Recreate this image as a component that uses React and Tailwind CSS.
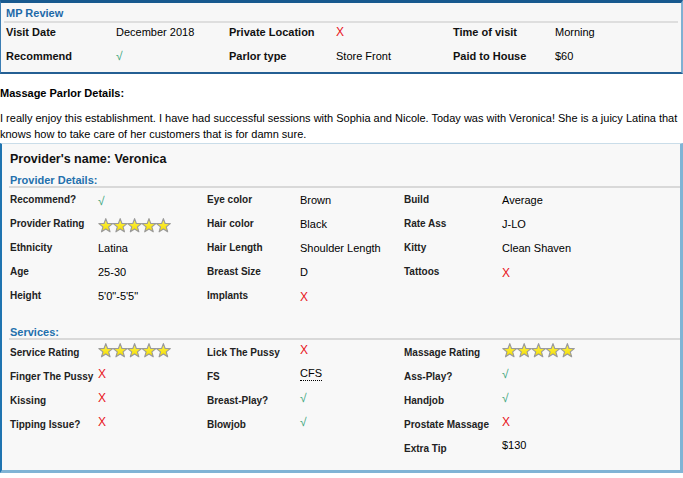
import React from "react";

const Check = () => <span className="text-[#3aa57a] text-[12px]">√</span>;
const Cross = () => <span className="text-[#e8141b] text-[12px]">X</span>;

const Stars = () => (
  <svg width="74" height="16" viewBox="0 0 74 16">
    <defs>
      <linearGradient id="sg" x1="0" y1="0" x2="0" y2="1">
        <stop offset="0" stopColor="#fff64a" />
        <stop offset="1" stopColor="#f5dc00" />
      </linearGradient>
    </defs>
    {[0, 1, 2, 3, 4].map((i) => (
      <polygon
        key={i}
        transform={`translate(${i * 14.4 + 0.5},0.8) scale(1.04)`}
        points="7,0.8 8.7,5.45 13.66,5.64 9.76,8.7 11.11,13.46 7,10.7 2.89,13.46 4.24,8.7 0.34,5.64 5.3,5.45"
        fill="url(#sg)"
        stroke="#9a9a9a"
        strokeWidth="1.1"
        strokeLinejoin="round"
      />
    ))}
  </svg>
);

const Cfs = () => (
  <span className="border-b border-dotted border-black leading-[13px]">CFS</span>
);

const topRows = [
  ["Visit Date", "December 2018", "Private Location", <Cross />, "Time of visit", "Morning"],
  ["Recommend", <Check />, "Parlor type", "Store Front", "Paid to House", "$60"],
];

const providerRows = [
  ["Recommend?", <Check />, "Eye color", "Brown", "Build", "Average"],
  ["Provider Rating", <Stars />, "Hair color", "Black", "Rate Ass", "J-LO"],
  ["Ethnicity", "Latina", "Hair Length", "Shoulder Length", "Kitty", "Clean Shaven"],
  ["Age", "25-30", "Breast Size", "D", "Tattoos", <Cross />],
  ["Height", "5'0\"-5'5\"", "Implants", <Cross />, "", ""],
];

const serviceRows = [
  ["Service Rating", <Stars />, "Lick The Pussy", <Cross />, "Massage Rating", <Stars />],
  ["Finger The Pussy", <Cross />, "FS", <Cfs />, "Ass-Play?", <Check />],
  ["Kissing", <Cross />, "Breast-Play?", <Check />, "Handjob", <Check />],
  ["Tipping Issue?", <Cross />, "Blowjob", <Check />, "Prostate Massage", <Cross />],
  ["", "", "", "", "Extra Tip", "$130"],
];

const DetailGrid = ({ rows, lift }) => (
  <div className="grid grid-cols-[88px_109px_93px_104px_98px_1fr]">
    {rows.map((row, r) =>
      row.map((cell, c) => (
        <div
          key={`${r}-${c}`}
          className={`h-[24px] flex items-center ${
            c % 2 === 0
              ? `text-[10px] font-bold text-[#222] ${lift ? "pt-[1px]" : "pb-[2px]"}`
              : `text-[11px] text-black ${lift ? "pb-[5px]" : "pt-[1px]"}`
          }`}
        >
          {cell}
        </div>
      ))
    )}
  </div>
);

export default function App() {
  return (
    <div className="w-[683px] bg-white text-black font-['Liberation_Sans',Arial,sans-serif]">
      {/* MP Review */}
      <div className="bg-[#f7f7f7] border-t-[3px] border-t-[#17598f] border-l border-l-[#3b7db3] border-r-2 border-r-[#7fb0d2] border-b-2 border-b-[#245f93] pb-[7px]">
        <div className="pt-[2px] pl-[5px] leading-[16px] text-[11px] font-bold text-[#1d69a8]">
          MP Review
        </div>
        <div className="mx-[3px] h-[2px] bg-[#dedede]" />
        <div className="grid grid-cols-[110px_113px_107px_117px_102px_1fr] gap-y-[6px] pl-[5px]">
          {topRows.map((row, r) =>
            row.map((cell, c) => (
              <div
                key={`${r}-${c}`}
                className={`h-[18px] flex items-center text-[11px] ${
                  c % 2 === 0 ? "font-bold text-[#111]" : "text-black"
                }`}
              >
                {cell}
              </div>
            ))
          )}
        </div>
      </div>

      {/* Parlor details */}
      <div className="mt-[11px] leading-[16px] text-[11px] font-bold">Massage Parlor Details:</div>
      <p className="mt-[9px] leading-[16px] text-[11px]">
        I really enjoy this establishment. I have had successful sessions with Sophia and Nicole. Today was with
        Veronica! She is a juicy Latina that knows how to take care of her customers that is for damn sure.
      </p>

      {/* Provider */}
      <div className="mt-[1px] bg-[#f8f8f8] border-t border-t-[#cadde9] border-l-2 border-l-[#1f74b0] border-r-[3px] border-r-[#80b4d5] border-b-[3px] border-b-[#80b4d5] pb-[10px]">
        <div className="pt-[6px] pl-[8px] leading-[18px] text-[12.5px] font-bold text-[#111]">
          Provider's name: Veronica
        </div>
        <div className="mt-[6px] pl-[8px] leading-[12px] text-[11px] font-bold text-[#2370ad]">
          Provider Details:
        </div>
        <div className="ml-[7px] h-[2px] bg-[#d9d9d9]" />
        <div className="pl-[8px]">
          <DetailGrid rows={providerRows} />
        </div>
        <div className="mt-[18px] pl-[8px] leading-[12px] text-[11px] font-bold text-[#2370ad]">
          Services:
        </div>
        <div className="ml-[7px] h-[2px] bg-[#d9d9d9]" />
        <div className="pl-[8px]">
          <DetailGrid rows={serviceRows} lift />
        </div>
      </div>
    </div>
  );
}
